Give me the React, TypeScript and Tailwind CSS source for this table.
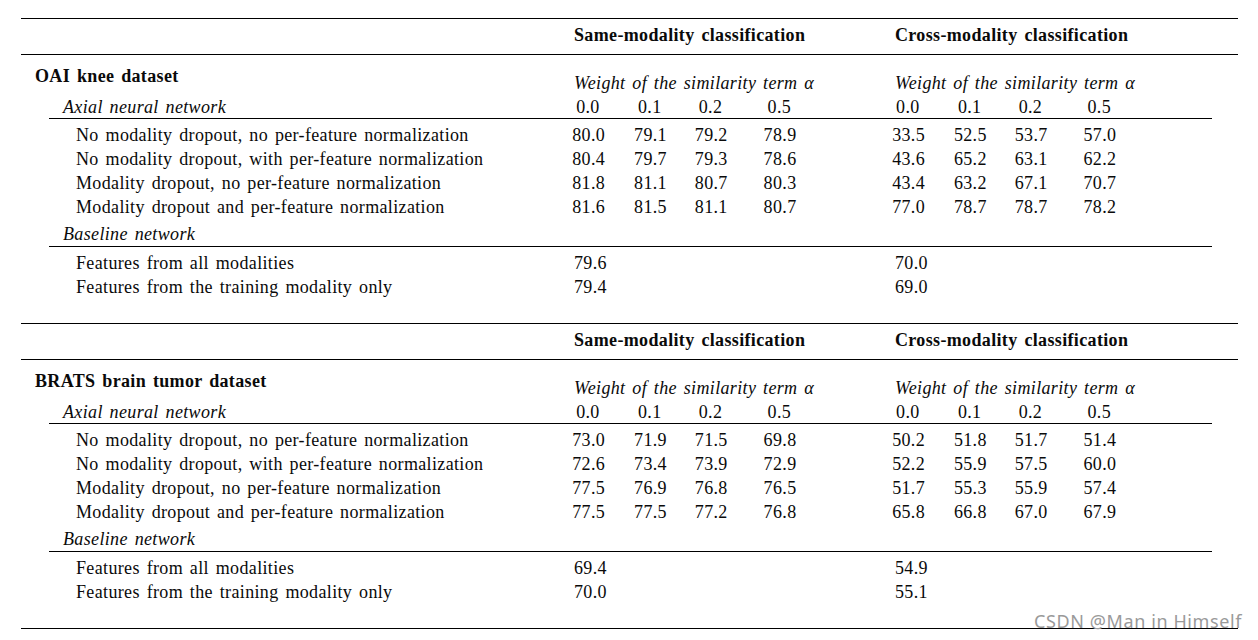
import React from 'react';

// One block of the results table (a dataset)
interface Section {
  title: string;
  axial: { label: string; same: string[]; cross: string[] }[];
  baseline: { label: string; same: string; cross: string }[];
}

const alphas = ['0.0', '0.1', '0.2', '0.5'];

const sections: Section[] = [
  {
    title: 'OAI knee dataset',
    axial: [
      { label: 'No modality dropout, no per-feature normalization', same: ['80.0', '79.1', '79.2', '78.9'], cross: ['33.5', '52.5', '53.7', '57.0'] },
      { label: 'No modality dropout, with per-feature normalization', same: ['80.4', '79.7', '79.3', '78.6'], cross: ['43.6', '65.2', '63.1', '62.2'] },
      { label: 'Modality dropout, no per-feature normalization', same: ['81.8', '81.1', '80.7', '80.3'], cross: ['43.4', '63.2', '67.1', '70.7'] },
      { label: 'Modality dropout and per-feature normalization', same: ['81.6', '81.5', '81.1', '80.7'], cross: ['77.0', '78.7', '78.7', '78.2'] },
    ],
    baseline: [
      { label: 'Features from all modalities', same: '79.6', cross: '70.0' },
      { label: 'Features from the training modality only', same: '79.4', cross: '69.0' },
    ],
  },
  {
    title: 'BRATS brain tumor dataset',
    axial: [
      { label: 'No modality dropout, no per-feature normalization', same: ['73.0', '71.9', '71.5', '69.8'], cross: ['50.2', '51.8', '51.7', '51.4'] },
      { label: 'No modality dropout, with per-feature normalization', same: ['72.6', '73.4', '73.9', '72.9'], cross: ['52.2', '55.9', '57.5', '60.0'] },
      { label: 'Modality dropout, no per-feature normalization', same: ['77.5', '76.9', '76.8', '76.5'], cross: ['51.7', '55.3', '55.9', '57.4'] },
      { label: 'Modality dropout and per-feature normalization', same: ['77.5', '77.5', '77.2', '76.8'], cross: ['65.8', '66.8', '67.0', '67.9'] },
    ],
    baseline: [
      { label: 'Features from all modalities', same: '69.4', cross: '54.9' },
      { label: 'Features from the training modality only', same: '70.0', cross: '55.1' },
    ],
  },
];

// four value cells of one group, widths follow the printed columns
const Group = ({ values, pad }: { values: string[]; pad?: boolean }) => (
  <>
    <div className={`w-[62px] ${pad ? 'pl-[4px]' : ''}`}>{values[0]}</div>
    <div className={`w-[61px] ${pad ? 'pl-[4px]' : ''}`}>{values[1]}</div>
    <div className={`w-[69px] ${pad ? 'pl-[4px]' : ''}`}>{values[2]}</div>
    <div className={`w-[129px] ${pad ? 'pl-[4px]' : ''}`}>{values[3]}</div>
  </>
);

const Block = ({ s }: { s: Section }) => (
  <div className="border-t border-black">
    {/* Header */}
    <div className="flex h-[36px] items-center border-b border-black pb-[3px] font-bold">
      <div className="w-[553px]" />
      <div className="w-[321px]">Same-modality classification</div>
      <div>Cross-modality classification</div>
    </div>

    {/* Dataset title + alpha caption */}
    <div className="flex h-[40px]">
      <div className="w-[553px] pl-[14px] pt-[9px] font-bold">{s.title}</div>
      <div className="flex w-[321px] items-end italic">Weight of the similarity term α</div>
      <div className="flex items-end italic">Weight of the similarity term α</div>
    </div>

    <div className="ml-[28px] w-[1163px]">
      <div className="flex h-[24px] items-center border-b border-black">
        <div className="w-[525px] pl-[14px] italic">Axial neural network</div>
        <Group values={alphas} pad />
        <Group values={alphas} pad />
      </div>

      <div className="pt-[4px]">
        {s.axial.map((r) => (
          <div key={r.label} className="flex h-[24px] items-center">
            <div className="w-[525px] pl-[27px]">{r.label}</div>
            <Group values={r.same} />
            <Group values={r.cross} />
          </div>
        ))}
      </div>

      <div className="pt-[3px]">
        <div className="flex h-[25px] items-center border-b border-black">
          <div className="w-[525px] pl-[14px] italic">Baseline network</div>
        </div>
      </div>

      <div className="pt-[4px]">
        {s.baseline.map((r) => (
          <div key={r.label} className="flex h-[24px] items-center">
            <div className="w-[525px] pl-[27px]">{r.label}</div>
            <div className="w-[321px]">{r.same}</div>
            <div>{r.cross}</div>
          </div>
        ))}
      </div>
    </div>
    <div className="h-[24px]" />
  </div>
);

export default function App() {
  return (
    <div
      className="relative h-[640px] w-[1258px] bg-white pl-[21px] pt-[18px] text-[18px] leading-[24px] tracking-[0.35px] text-[#0a0a0a] [word-spacing:2px]"
      style={{ fontFamily: '"Liberation Serif", "Times New Roman", serif' }}
    >
      <div className="w-[1217px] border-b border-black">
        {sections.map((s) => (
          <Block key={s.title} s={s} />
        ))}
      </div>
      <div
        className="absolute left-[1034px] top-[608px] text-[18px] leading-[26px] tracking-[0.6px] text-[#9a9a9a] [word-spacing:0px]"
        style={{ fontFamily: '"Noto Sans", "DejaVu Sans", sans-serif' }}
      >
        CSDN @Man in Himself
      </div>
    </div>
  );
}
